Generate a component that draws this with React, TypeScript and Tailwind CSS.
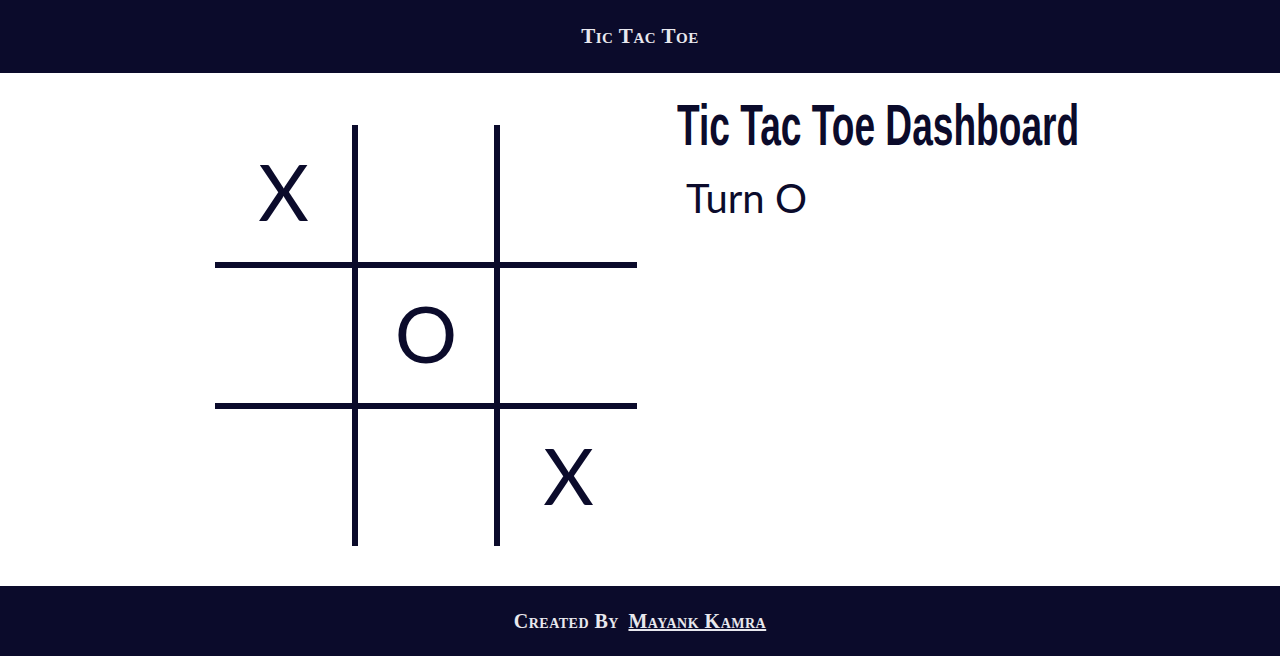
import { useState } from "react";

type Cell = "X" | "O" | "";

export default function App() {
    const [cells, setCells] = useState<Cell[]>(["X", "", "", "", "O", "", "", "", "X"]);
    const [turn, setTurn] = useState<"X" | "O">("O");

    const play = (i: number) => {
        if (cells[i]) return;
        const next = [...cells];
        next[i] = turn;
        setCells(next);
        setTurn(turn === "X" ? "O" : "X");
    };

    return (
        <div className="min-h-screen flex flex-col bg-white text-[#0b0b2b]">
            {/* Header */}
            <header className="h-[73px] bg-[#0b0b2b] flex items-center justify-center">
                <h1 className="text-[#e8e8ee] text-[21px] font-semibold [font-variant:small-caps] tracking-wide font-['Liberation_Serif',serif]">
                    Tic Tac Toe
                </h1>
            </header>

            {/* Board + Dashboard */}
            <main className="flex-1 flex pl-[215px] pt-[23px] gap-[40px]">
                <div className="mt-[29px] grid grid-cols-[143px_142px_137px] grid-rows-[143px_141px_137px] h-fit">
                    {cells.map((c, i) => (
                        <button
                            key={i}
                            onClick={() => play(i)}
                            className={
                                "box-border border-[#0b0b2b] flex items-center justify-center pb-[6px] text-[78px] leading-none font-['Lato',sans-serif] " +
                                (i % 3 < 2 ? "border-r-[6px] " : "") +
                                (i < 6 ? "border-b-[6px]" : "")
                            }
                        >
                            {c}
                        </button>
                    ))}
                </div>

                <div>
                    <h2 className="text-[58px] leading-none font-bold font-['Liberation_Sans_Narrow',sans-serif] scale-x-[0.64] origin-left whitespace-nowrap">
                        Tic Tac Toe Dashboard
                    </h2>
                    <p className="mt-[24px] ml-[9px] text-[40px] leading-none font-['Lato',sans-serif]">
                        Turn {turn}
                    </p>
                </div>
            </main>

            {/* Footer */}
            <footer className="h-[70px] bg-[#0b0b2b] flex items-center justify-center">
                <p className="text-[#e8e8ee] text-[20px] font-semibold [font-variant:small-caps] tracking-wide font-['Liberation_Serif',serif]">
                    Created By <a href="#" className="underline ml-1">Mayank Kamra</a>
                </p>
            </footer>
        </div>
    );
}
